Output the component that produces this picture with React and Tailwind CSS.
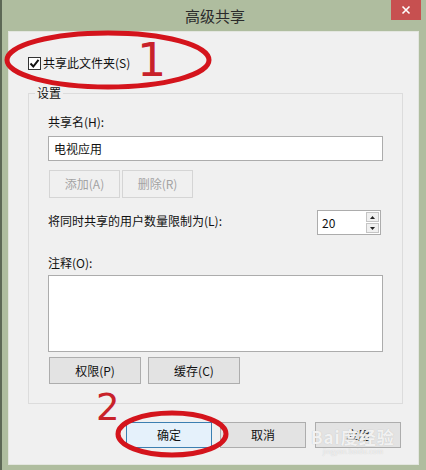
import React from "react";

const F = { fontFamily: '"Noto Sans CJK SC", "Noto Sans", sans-serif' };

function Btn({ children, w, h, disabled, primary, className = "" }) {
  const base = primary
    ? "bg-[#e5f1fb] border-[#3c7fb1] text-[#111]"
    : disabled
    ? "bg-[#f0f0f0] border-[#d5d5d5] text-[#a3a3a3]"
    : "bg-[#e3e3e3] border-[#adadad] text-[#111]";
  return (
    <div
      className={`flex items-center justify-center border text-[12px] leading-[16px] ${base} ${w} ${h} ${className}`}
    >
      {children}
    </div>
  );
}

export default function App() {
  return (
    <div
      style={F}
      className="relative w-[426px] h-[470px] overflow-hidden bg-[#afbd9f] border-l-2 border-[#5d6856]"
    >
      {/* title bar */}
      <div className="relative h-[31px] flex items-center justify-center">
        <span className="text-[15px] leading-[18px] text-[#2a2a2a] ml-[2px]">高级共享</span>
        <div className="absolute right-[5px] top-0 w-[30px] h-[20px] bg-[#c75050] flex items-center justify-center">
          <svg width="10" height="10" viewBox="0 0 10 10">
            <path d="M1.5 1.5 L8.5 8.5 M8.5 1.5 L1.5 8.5" stroke="#fff" strokeWidth="1.6" />
          </svg>
        </div>
      </div>

      {/* content */}
      <div className="ml-[6px] w-[411px] h-[434px] bg-[#f0f0f0] border border-[#e3e6df] flex flex-col">
        {/* checkbox row */}
        <div className="mt-[21px] ml-[19px] h-[20px] flex items-center gap-[2px]">
          <div className="w-[13px] h-[13px] bg-white border border-[#333] flex items-center justify-center">
            <svg width="11" height="11" viewBox="0 0 11 11">
              <path d="M1.5 5.5 L4.3 8.5 L9.5 1.8" fill="none" stroke="#111" strokeWidth="2" />
            </svg>
          </div>
          <span className="text-[12px] leading-[16px] text-[#111]">共享此文件夹(S)</span>
        </div>

        {/* group box */}
        <div className="relative mt-[20px] ml-[19px] w-[375px] h-[311px] border border-[#dcdcdc] flex flex-col pl-[19px]">
          <span className="absolute -top-[9px] left-[6px] px-[2px] bg-[#f0f0f0] text-[12px] leading-[16px] text-[#111]">
            设置
          </span>
          <div className="mt-[20px] text-[12px] leading-[16px] text-[#111]">共享名(H):</div>
          <div className="mt-[6px] w-[335px] h-[25px] bg-white border border-[#acacac] flex items-center pl-[5px] text-[12px] leading-[16px] text-[#111]">
            电视应用
          </div>
          <div className="mt-[9px] flex gap-[2px] ml-[1px]">
            <Btn w="w-[71px]" h="h-[28px]" disabled>添加(A)</Btn>
            <Btn w="w-[71px]" h="h-[28px]" disabled>删除(R)</Btn>
          </div>
          <div className="mt-[12px] w-[333px] h-[25px] flex items-center justify-between">
            <span className="text-[12px] leading-[16px] text-[#111] -mt-[3px]">将同时共享的用户数量限制为(L):</span>
            <div className="w-[64px] h-[25px] bg-white border border-[#acacac] flex">
              <div className="flex-1 flex items-center pl-[4px] text-[12px] leading-[16px] text-[#111]">20</div>
              <div className="w-[15px] flex flex-col gap-[1px] p-[1px]">
                <div className="flex-1 border border-[#c5c5c5] bg-[#f0f0f0] flex items-center justify-center">
                  <svg width="5" height="3" viewBox="0 0 5 3">
                    <path d="M0 3 L2.5 0 L5 3 Z" fill="#222" />
                  </svg>
                </div>
                <div className="flex-1 border border-[#c5c5c5] bg-[#f0f0f0] flex items-center justify-center">
                  <svg width="5" height="3" viewBox="0 0 5 3">
                    <path d="M0 0 L2.5 3 L5 0 Z" fill="#222" />
                  </svg>
                </div>
              </div>
            </div>
          </div>
          <div className="mt-[20px] text-[12px] leading-[16px] text-[#111]">注释(O):</div>
          <div className="mt-[4px] w-[335px] h-[77px] bg-white border border-[#acacac]" />
          <div className="mt-[5px] flex gap-[7px] ml-[1px]">
            <Btn w="w-[92px]" h="h-[27px]">权限(P)</Btn>
            <Btn w="w-[92px]" h="h-[27px]">缓存(C)</Btn>
          </div>
        </div>

        {/* bottom buttons */}
        <div className="mt-[18px] ml-[117px] flex">
          <Btn w="w-[86px]" h="h-[26px]" primary>确定</Btn>
          <Btn w="w-[86px]" h="h-[26px]" className="ml-[8px]">取消</Btn>
          <div className="relative ml-[9px]">
            <Btn w="w-[86px]" h="h-[26px]">应用</Btn>
          </div>
        </div>
      </div>

      {/* watermark */}
      <div className="absolute left-[309px] top-[427px] flex flex-col items-center pointer-events-none">
        <span className="text-[17px] leading-[20px] font-bold text-white/80 tracking-[1px] [text-shadow:0_0_1px_#b8b8b8]">
          Bai度经验
        </span>
        <span className="text-[7px] leading-[8px] text-white/70 [text-shadow:0_0_1px_#c0c0c0]">jingyan.baidu.com</span>
      </div>

      {/* annotations */}
      <svg className="absolute left-0 top-0 pointer-events-none" width="426" height="470" viewBox="0 0 426 470">
        <ellipse cx="106" cy="60" rx="101" ry="27" fill="none" stroke="#d4141c" strokeWidth="5" />
        <ellipse cx="170" cy="434" rx="54" ry="21" fill="none" stroke="#d4141c" strokeWidth="5" />
      </svg>
      <span
        className="absolute left-[135px] top-[35px] text-[46px] leading-[50px] text-[#c8222a]"
        style={{ fontFamily: '"DejaVu Sans", sans-serif' }}
      >
        1
      </span>
      <span
        className="absolute left-[94px] top-[388px] text-[37px] leading-[40px] text-[#c8222a]"
        style={{ fontFamily: '"DejaVu Sans", sans-serif' }}
      >
        2
      </span>
    </div>
  );
}
